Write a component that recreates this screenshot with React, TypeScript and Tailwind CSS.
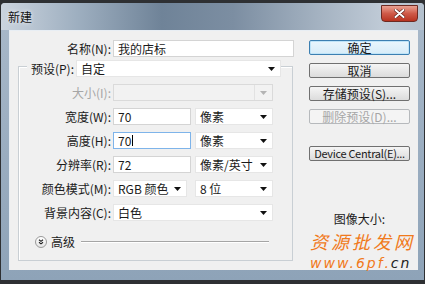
import React from "react";

const F = "font-['Noto_Sans_CJK_SC','Noto_Sans',sans-serif]";

function Caret({ disabled }: { disabled?: boolean }) {
  return (
    <svg width="7" height="4" viewBox="0 0 7 4" className="shrink-0">
      <path d="M0 0h7L3.5 4z" fill={disabled ? "#b4b4b4" : "#111"} />
    </svg>
  );
}

function Select({ value, w, disabled }: { value?: string; w: string; disabled?: boolean }) {
  return (
    <div
      className={`${w} h-[17px] flex items-center justify-between pl-[4px] pr-[5px] border ${
        disabled ? "bg-[#f2f2f2] border-[#dadada]" : "bg-white border-[#e6e6e6]"
      }`}
    >
      <span className="text-[12px] leading-none text-[#1a1a1a] whitespace-nowrap">{value}</span>
      {disabled ? (
        <div className="h-full flex items-center pl-[5px] border-l border-[#e2e2e2]">
          <Caret disabled />
        </div>
      ) : (
        <Caret />
      )}
    </div>
  );
}

function Input({ value, w, focused }: { value: string; w: string; focused?: boolean }) {
  return (
    <div
      className={`${w} h-[17px] flex items-center pl-[4px] bg-white border ${
        focused ? "border-[#7eb4ea]" : "border-[#d4d4d4]"
      }`}
    >
      <span className="text-[12px] leading-none text-[#1a1a1a] whitespace-nowrap">{value}</span>
      {focused && <span className="w-[1px] h-[11px] bg-black ml-[1px]" />}
    </div>
  );
}

function Row({ label, disabled, children }: { label: string; disabled?: boolean; children: React.ReactNode }) {
  return (
    <div className="flex items-center h-[17px]">
      <div
        className={`w-[92px] mr-[2px] text-right text-[12px] leading-none whitespace-nowrap ${
          disabled ? "text-[#a6a6a6]" : "text-[#1a1a1a]"
        }`}
      >
        {label}
      </div>
      {children}
    </div>
  );
}

function Btn({ label, kind, small }: { label: string; kind?: "default" | "disabled"; small?: boolean }) {
  const base = `w-[101px] h-[15px] flex items-center justify-center rounded-[2px] ${
    small ? "text-[11px] tracking-[-0.3px]" : "text-[12px]"
  } leading-none whitespace-nowrap border`;
  if (kind === "default")
    return (
      <div className={`${base} border-[#3c7fb1] bg-gradient-to-b from-[#eaf6fd] to-[#d7ecf8] text-[#1a1a1a] shadow-[inset_0_0_0_1px_#bfe4f8]`}>
        {label}
      </div>
    );
  if (kind === "disabled")
    return (
      <div className={`${base} border-[#b6b9bc] bg-[#f4f4f4] text-[#a6a6a6]`}>{label}</div>
    );
  return (
    <div className={`${base} border-[#707070] bg-gradient-to-b from-[#f5f5f5] to-[#dcdcdc] text-[#1a1a1a]`}>
      {label}
    </div>
  );
}

export default function App() {
  return (
    <div className={`${F} relative w-[425px] h-[284px] overflow-hidden bg-[#2e3033] pt-[3px] px-[1px] pb-[4px]`}>
      <div className="h-full flex flex-col bg-gradient-to-b from-[#a9b9ca] to-[#8ea3b8] rounded-t-[4px]">
        {/* title bar */}
        <div className="h-[27px] flex justify-between bg-[linear-gradient(90deg,#cbd4de_0%,#9eafc0_18%,#6f8398_38%,#7c8ea2_55%,#a4b2c1_75%,#bfcad6_90%,#b3c0cd_100%)] rounded-t-[4px]">
          <div className="pl-[7px] flex items-center text-[12px] leading-none text-[#111] [text-shadow:0_0_4px_#ffffff]">
            新建
          </div>
          <div className="mt-[2px] mr-[6px] w-[37px] h-[17px] rounded-b-[4px] border border-[#6d2a22] bg-gradient-to-b from-[#e9a193] via-[#cf5a48] to-[#b8321f] flex items-center justify-center">
            <svg width="11" height="9" viewBox="0 0 11 9">
              <path d="M1.5 1l8 7M9.5 1l-8 7" stroke="#5a1a12" strokeWidth="3.2" strokeLinecap="round" />
              <path d="M1.5 1l8 7M9.5 1l-8 7" stroke="#ffffff" strokeWidth="2" strokeLinecap="round" />
            </svg>
          </div>
        </div>

        {/* client area */}
        <div className="ml-[8px] mr-[6px] h-[240px] bg-[#f0f0f0] border-l border-t border-[#e8eef4] flex">
          {/* left column */}
          <div className="flex flex-col pt-[9px] pl-[8px]">
            <div className="flex items-center h-[17px] pl-[1px]">
              <div className="w-[92px] mr-[2px] text-right text-[12px] leading-none text-[#1a1a1a] whitespace-nowrap">
                名称(N):
              </div>
              <Input value="我的店标" w="w-[181px]" />
            </div>

            <div className="mt-[9px] w-[275px] h-[195px] border border-[#c9cfd4] shadow-[inset_1px_1px_0_#ffffff] flex flex-col">
              <div className="-mt-[7px] ml-[8px] w-[254px] flex items-center bg-[#f0f0f0] h-[17px]">
                <div className="w-[47px] mr-[2px] text-right text-[12px] leading-none text-[#1a1a1a] whitespace-nowrap">
                  预设(P):
                </div>
                <Select value="自定" w="w-[205px]" />
              </div>
              <div className="flex flex-col gap-[7px] mt-[7px]">
                <Row label="大小(I):" disabled>
                  <Select w="w-[160px]" disabled />
                </Row>
                <Row label="宽度(W):">
                  <Input value="70" w="w-[78px]" />
                  <div className="ml-[4px]">
                    <Select value="像素" w="w-[78px]" />
                  </div>
                </Row>
                <Row label="高度(H):">
                  <Input value="70" w="w-[78px]" focused />
                  <div className="ml-[4px]">
                    <Select value="像素" w="w-[78px]" />
                  </div>
                </Row>
                <Row label="分辨率(R):">
                  <Input value="72" w="w-[78px]" />
                  <div className="ml-[4px]">
                    <Select value="像素/英寸" w="w-[78px]" />
                  </div>
                </Row>
                <Row label="颜色模式(M):">
                  <Select value="RGB 颜色" w="w-[74px]" />
                  <div className="ml-[8px]">
                    <Select value="8 位" w="w-[78px]" />
                  </div>
                </Row>
                <Row label="背景内容(C):">
                  <Select value="白色" w="w-[160px]" />
                </Row>
              </div>
              <div className="mt-[15px] ml-[16px] flex items-center h-[12px]">
                <div className="w-[12px] h-[12px] rounded-full border border-[#9a9a9a] bg-gradient-to-b from-white to-[#e4e4e4] flex items-center justify-center">
                  <svg width="6" height="6" viewBox="0 0 6 6">
                    <path d="M1 0.8l2 1.6 2-1.6M1 3.3l2 1.6 2-1.6" stroke="#222" strokeWidth="1.1" fill="none" />
                  </svg>
                </div>
                <span className="ml-[4px] text-[12px] leading-none text-[#1a1a1a]">高级</span>
                <div className="ml-[6px] w-[188px] h-[2px] border-t border-[#a5a5a5] border-b border-b-white" />
              </div>
            </div>
          </div>

          {/* right column */}
          <div className="ml-[15px] pt-[9px] flex flex-col items-center w-[101px]">
            <div className="flex flex-col gap-[8px]">
              <Btn label="确定" kind="default" />
              <Btn label="取消" />
              <Btn label="存储预设(S)..." />
              <Btn label="删除预设(D)..." kind="disabled" />
            </div>
            <div className="mt-[22px]">
              <Btn label="Device Central(E)..." small />
            </div>
            <div className="mt-[52px] h-[12px] text-[12px] leading-[12px] text-[#1a1a1a] whitespace-nowrap">图像大小:</div>
          </div>
        </div>
      </div>

      {/* watermark overlay */}
      <div className="absolute left-[310px] top-[232px] flex flex-col items-start pointer-events-none">
        <div className="h-[19px] text-[18px] leading-[19px] italic text-[#f07a1c] tracking-[3px] whitespace-nowrap">资源批发网</div>
        <div className="mt-[5px] h-[14px] text-[14px] leading-[14px] italic text-[#f07a1c] tracking-[2px] whitespace-nowrap font-['DejaVu_Sans',sans-serif]">
          www.6pf.<span className="text-[#222]">cn</span>
        </div>
      </div>
    </div>
  );
}
